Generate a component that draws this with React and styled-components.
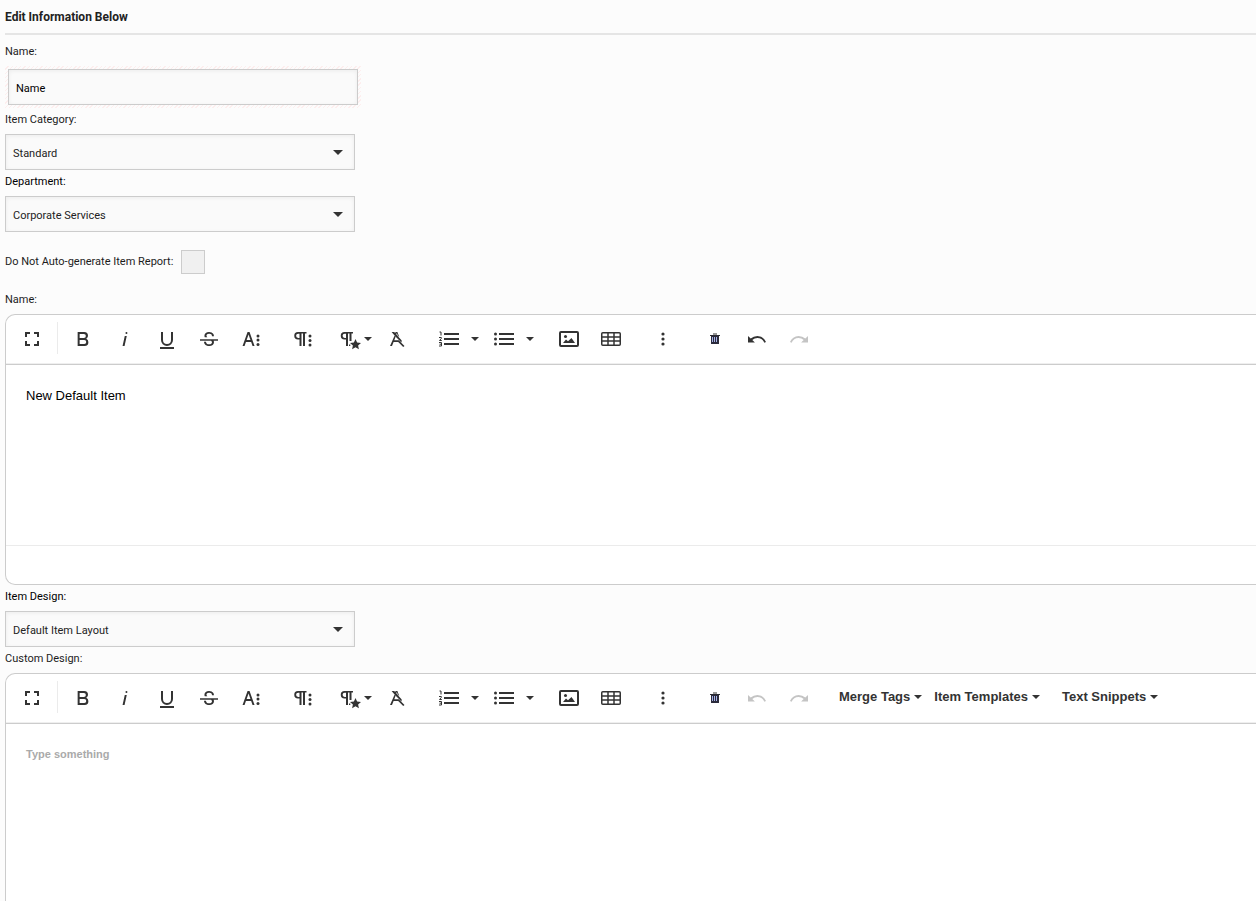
import React from 'react'
import styled, { createGlobalStyle, css } from 'styled-components'

const GlobalStyle = createGlobalStyle`
  * {
    box-sizing: border-box;
  }
  html {
    scrollbar-width: none;
  }
  body {
    margin: 0;
    background: #fcfcfc;
    color: #222;
    font-family: Roboto, 'Noto Sans', sans-serif;
    font-size: 11px;
  }
`

const Page = styled.form`
  padding-left: 5px;
`
const Heading = styled.h1`
  margin: 0 0 5px;
  padding-top: 6px;
  height: 35px;
  border-bottom: 2px solid #e5e5e5;
  font-size: 12px;
  line-height: 22px;
  font-weight: 700;
`
const Label = styled.label`
  display: block;
  margin-bottom: 2px;
  line-height: 24px;
  color: ${props => props.$dark ? '#000' : '#1c1c1c'};
`
const field = css`
  display: block;
  width: 100%;
  height: 36px;
  padding: 2px 7px 0;
  border: 1px solid #ccc;
  border-radius: 0;
  background: #fafafa;
  box-shadow: inset 0 1px 4px rgba(0, 0, 0, 0.06);
  color: #222;
  font: inherit;
  outline: none;
`
const Required = styled.div`
  max-width: 356px;
  padding: 3px;
  background: repeating-linear-gradient(135deg, #fcfcfc 0 2px, #fdeeee 2px 3px);
`
const TextInput = styled.input`
  ${field}
  color: #000;
`
const SelectWrap = styled.div`
  display: grid;
  align-items: center;
  max-width: 350px;

  > * {
    grid-area: 1 / 1;
  }
  svg {
    justify-self: end;
    margin-right: 12px;
    pointer-events: none;
  }
`
const SelectInput = styled.select`
  ${field}
  appearance: none;
`
const CheckRow = styled.div`
  display: flex;
  align-items: center;
  gap: 8px;
  margin: 18px 0 14px;

  label {
    margin: 0;
  }
`
const CheckBox = styled.input`
  appearance: none;
  width: 24px;
  height: 24px;
  margin: 0;
  border: 1px solid #ccc;
  background: #f0f0f0;

  &:checked {
    background: #555;
  }
`

const EditorBox = styled.section`
  border: 1px solid #ccc;
  border-right: none;
  border-radius: 10px 0 0 10px;
  background: #fff;
  overflow: hidden;
`
const Toolbar = styled.div`
  display: flex;
  gap: 14px;
  height: 50px;
  padding: 5px 0 0 7px;
  border-bottom: 1px solid #ccc;
  box-shadow: inset 0 -1px 0 #efefef;
`
const Group = styled.div`
  display: flex;
  flex: none;
  gap: 4px;
  height: 38px;
`
const Divider = styled.div`
  width: 1px;
  height: 32px;
  margin: 2px 2px 0 2px;
  background: #ebebeb;
`
const ToolButton = styled.button`
  display: flex;
  align-items: center;
  justify-content: center;
  width: 38px;
  height: 38px;
  padding: 0;
  border: none;
  background: none;
  color: #333;
  cursor: pointer;

  &:disabled {
    color: #c4c4c4;
    cursor: default;
  }

  ${props => props.$dropdown && css`
    justify-content: flex-end;
    width: 48px;
    gap: 2px;
    padding-right: 2px;
  `}
`
const CaretButton = styled(ToolButton)`
  width: 13px;
`
const Joined = styled.div`
  display: flex;
`
const TextButton = styled(ToolButton)`
  width: auto;
  height: 35px;
  gap: 4px;
  padding: 0 1px 0 7px;
  font: bold 13px 'Liberation Sans', Arial, sans-serif;
`
const Content = styled.textarea`
  display: block;
  width: 100%;
  height: 180px;
  padding: 20px;
  border: none;
  outline: none;
  resize: none;
  background: #fff;
  color: #000;
  font: 13px/21px 'Liberation Sans', Arial, sans-serif;

  &::placeholder {
    color: #aaa;
    font-size: 11px;
    font-weight: 700;
  }
`
const Footer = styled.div`
  height: 39px;
  border-top: 1px solid #ebebeb;
`

const Icon = ({ children }) => (
  <svg width="24" height="24" viewBox="0 0 24 24" fill="currentColor" aria-hidden="true">{children}</svg>
)

const Caret = ({ large }) => (
  <svg width={large ? 10 : 8} height={large ? 5 : 4} viewBox="0 0 8 4" fill="#333" aria-hidden="true">
    <path d="M0 0h8L4 4z" />
  </svg>
)

const ICONS = {
  fullscreen: <path d="M5 5h5v2H7v3H5zM14 5h5v5h-2V7h-3zM5 14h2v3h3v2H5zM17 14h2v5h-5v-2h3z" />,
  bold: <path d="M15.25 11.8A3.68 3.68 0 0 0 17 9a3.93 3.93 0 0 0-3.86-4H6.65v14h7a3.74 3.74 0 0 0 3.7-3.78v-.12a3.64 3.64 0 0 0-2.1-3.3zM8.65 7h4.2a2 2 0 0 1 0 4h-4.2zm4.6 10h-4.6v-4h4.6a2 2 0 0 1 0 4z" />,
  italic: <path d="M11.76 9h2l-2.2 10h-2zm1.68-4a1 1 0 1 0 1 1 1 1 0 0 0-1-1z" />,
  underline: <path d="M19 20v2H5v-2zM16 5v8a4 4 0 0 1-8 0V5H6v8a6 6 0 0 0 12 0V5z" />,
  strike: <path d="M3 12.2h18v1.5h-4.37a3.6 3.6 0 0 1 .35 1.6 3.25 3.25 0 0 1-1.31 2.7A5.55 5.55 0 0 1 12.2 19a6.44 6.44 0 0 1-2.62-.54 4.46 4.46 0 0 1-1.9-1.49 3.67 3.67 0 0 1-.67-2.15v-.12h2v.12a2.18 2.18 0 0 0 .86 1.83 3.69 3.69 0 0 0 2.33.68 3.39 3.39 0 0 0 2.08-.55 1.73 1.73 0 0 0 .7-1.46 1.7 1.7 0 0 0-.65-1.44 3 3 0 0 0-.27-.18H3zM16.34 7.06a4.18 4.18 0 0 0-1.72-1.51A5.63 5.63 0 0 0 12.1 5a5.16 5.16 0 0 0-3.36 1.06 3.36 3.36 0 0 0-1.3 2.7 3.23 3.23 0 0 0 .32 1.44h2.6a1.9 1.9 0 0 1-.9-1.46 1.8 1.8 0 0 1 .68-1.51 3.13 3.13 0 0 1 1.97-.56 3.05 3.05 0 0 1 2.1.67 2.35 2.35 0 0 1 .74 1.83v.12h2v-.12a3.9 3.9 0 0 0-.61-2.11z" />,
  moreText: (
    <>
      <path d="M13.55 19h2l-5-14h-2l-5 14h2l1.4-4h5.2zm-5.9-6l1.9-5.4 1.9 5.4z" />
      <circle cx="19" cy="9" r="1.5" /><circle cx="19" cy="13" r="1.5" /><circle cx="19" cy="17.5" r="1.5" />
    </>
  ),
  moreParagraph: (
    <>
      <path fillRule="evenodd" d="M7 5h8.500v1.500H14V19h-2V6.500h-1.500V19h-2v-6.500H7A3.750 3.750 0 0 1 7 5zM8.500 6.700H7.200a2.100 2.100 0 0 0 0 4.200h1.300z" />
      <circle cx="19" cy="9" r="1.500" /><circle cx="19" cy="13.500" r="1.500" /><circle cx="19" cy="18" r="1.500" />
    </>
  ),
  paragraphStyle: (
    <>
      <path fillRule="evenodd" d="M6.500 5H15v1.500h-1.500V14h-2V6.500H10V19H8v-6.500H6.500a3.750 3.750 0 0 1 0-7.500zM8 6.700H6.700a2.100 2.100 0 0 0 0 4.200H8zM11 17.500h1.300V19H11z" />
      <path d="M17.500 12l1.600 3.500 3.900.4-2.900 2.600.8 3.800-3.400-2-3.400 2 .8-3.800-2.900-2.600 3.900-.4z" />
    </>
  ),
  clear: <path d="M10.600 5h1.800l1.900 5-1.500-1.600-1-2.300-.6 1.700L10 6.500zM9.500 8.700l1.100 1.100L9.300 13.300h4.500l5.700 5.600-1.300 1.100L13.200 15H8.600L7 19H5zM6.600 5h2.600l7.500 8.500-.2 2.100L10 9z" />,
  ordered: (
    <>
      <path d="M7 6h15v2H7zM7 11h15v2H7zM7 16h15v2H7z" />
      <path d="M2.500 5h1.500v3.500M2 10.500h2.300v1L2.500 13.500h2.300M2 15.500h2.500v3.500H2M2.500 17.200h2" fill="none" stroke="currentColor" />
    </>
  ),
  unordered: (
    <>
      <path d="M7 6h15v2H7zM7 11h15v2H7zM7 16h15v2H7z" />
      <circle cx="3.500" cy="7" r="1.500" /><circle cx="3.500" cy="12" r="1.500" /><circle cx="3.500" cy="17" r="1.500" />
    </>
  ),
  image: (
    <>
      <rect x="3" y="5" width="18" height="14" rx="1" fill="none" stroke="currentColor" strokeWidth="2" />
      <path d="M6 16l3-3.500 2 1.800 3.500-3.300L18 16z" /><circle cx="8.500" cy="9.500" r="1.500" />
    </>
  ),
  table: (
    <>
      <rect x="2.750" y="5.750" width="18.500" height="12.500" rx="1" fill="none" stroke="currentColor" strokeWidth="1.500" />
      <path d="M3 10h18M3 14h18M9 6v12M15 6v12" stroke="currentColor" strokeWidth="1.500" />
    </>
  ),
  more: (
    <>
      <circle cx="12" cy="7" r="1.600" /><circle cx="12" cy="12" r="1.600" /><circle cx="12" cy="17" r="1.600" />
    </>
  ),
  trash: (
    <>
      <path d="M10 6h4v2h-4z" fill="#999" />
      <path d="M7 8h10v1H7z" fill="#2b2b33" />
      <path d="M8 9h8v8H8z" fill="#2b2b3c" />
      <path d="M9 10h1v5H9zM11 10h1v5h-1zM13 10h1v5h-1z" fill="#a9b4ea" />
    </>
  ),
  undo: <path d="M21 15l-1.600.8A7.900 7.900 0 0 0 12.400 11a8 8 0 0 0-5.100 2l2.600 2.600H3V8.900l2.700 2.700A10.200 10.200 0 0 1 12.400 9 10 10 0 0 1 21 15z" />,
  redo: <path d="M3 15l1.600.8a7.900 7.900 0 0 1 7-4.800 8 8 0 0 1 5.100 2l-2.600 2.600H21V8.900l-2.700 2.700A10.200 10.200 0 0 0 11.600 9 10 10 0 0 0 3 15z" />
}

const Tool = ({ icon, title, disabled, dropdown }) => (
  <ToolButton type="button" title={title} aria-label={title} disabled={disabled} $dropdown={dropdown}>
    <Icon>{ICONS[icon]}</Icon>
    {dropdown && <Caret />}
  </ToolButton>
)

const ListTool = ({ icon, title }) => (
  <Joined>
    <Tool icon={icon} title={title} />
    <CaretButton type="button" aria-label={`${title} options`}><Caret /></CaretButton>
  </Joined>
)

const Editor = ({ id, value, placeholder, canUndo, menus = [] }) => (
  <EditorBox>
    <Toolbar role="toolbar">
      <Group>
        <Tool icon="fullscreen" title="Fullscreen" />
        <Divider />
        <Tool icon="bold" title="Bold" />
        <Tool icon="italic" title="Italic" />
        <Tool icon="underline" title="Underline" />
        <Tool icon="strike" title="Strikethrough" />
        <Tool icon="moreText" title="More Text" />
      </Group>
      <Group>
        <Tool icon="moreParagraph" title="More Paragraph" />
        <Tool icon="paragraphStyle" title="Paragraph Style" dropdown />
        <Tool icon="clear" title="Clear Formatting" />
      </Group>
      <Group>
        <ListTool icon="ordered" title="Ordered List" />
        <ListTool icon="unordered" title="Unordered List" />
      </Group>
      <Group>
        <Tool icon="image" title="Insert Image" />
        <Tool icon="table" title="Insert Table" />
      </Group>
      <Group>
        <Tool icon="more" title="More Misc" />
      </Group>
      <Group>
        <Tool icon="trash" title="Clear" />
        <Tool icon="undo" title="Undo" disabled={!canUndo} />
        <Tool icon="redo" title="Redo" disabled />
      </Group>
      {menus.map(group => (
        <Group key={group[0]}>
          {group.map(name => (
            <TextButton type="button" key={name}>{name}<Caret /></TextButton>
          ))}
        </Group>
      ))}
    </Toolbar>
    <Content id={id} defaultValue={value} placeholder={placeholder} spellCheck={false} />
    <Footer />
  </EditorBox>
)

const Select = ({ id, option }) => (
  <SelectWrap>
    <SelectInput id={id}>
      <option>{option}</option>
    </SelectInput>
    <Caret large />
  </SelectWrap>
)

const App = () => (
  <>
    <GlobalStyle />
    <Page>
      <Heading>Edit Information Below</Heading>
      <Label htmlFor="name">Name:</Label>
      <Required>
        <TextInput id="name" type="text" defaultValue="Name" />
      </Required>
      <Label htmlFor="category">Item Category:</Label>
      <Select id="category" option="Standard" />
      <Label htmlFor="department" $dark>Department:</Label>
      <Select id="department" option="Corporate Services" />
      <CheckRow>
        <Label htmlFor="no-report">Do Not Auto-generate Item Report:</Label>
        <CheckBox id="no-report" type="checkbox" />
      </CheckRow>
      <Label htmlFor="item-name">Name:</Label>
      <Editor id="item-name" value="New Default Item" canUndo />
      <Label htmlFor="design" $dark>Item Design:</Label>
      <Select id="design" option="Default Item Layout" />
      <Label htmlFor="custom">Custom Design:</Label>
      <Editor
        id="custom"
        placeholder="Type something"
        menus={[['Merge Tags', 'Item Templates'], ['Text Snippets']]}
      />
    </Page>
  </>
)

export default App
